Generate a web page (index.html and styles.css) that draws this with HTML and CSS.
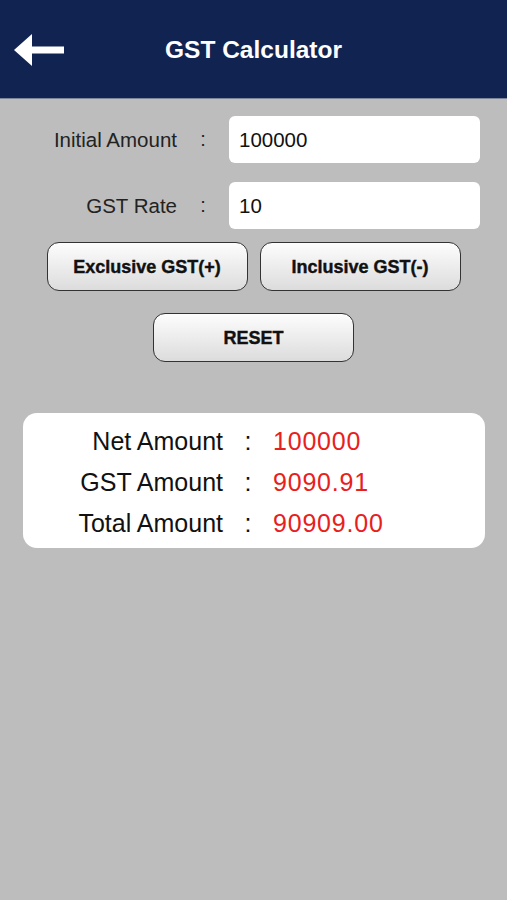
FILE: index.html
```html
<!DOCTYPE html>
<html>

<head>
    <meta charset="utf-8" />
    <title>GST Calculator</title>
    <link rel="stylesheet" href="styles.css">
</head>

<body>

<div class="header">
    <span class="back">
        <svg width="52" height="34" viewBox="0 0 52 34">
            <path d="M0 16 L18 0 L18 12.5 L50 12.5 L50 19.5 L18 19.5 L18 32 Z" fill="#fff"/>
        </svg>
    </span>
    <h1 class="title">GST Calculator</h1>
</div>

<div class="main">
    <div class="form">
        <div class="field">
            <label class="label">Initial Amount</label>
            <span class="colon">:</span>
            <input class="input" type="text" value="100000">
        </div>
        <div class="field">
            <label class="label">GST Rate</label>
            <span class="colon">:</span>
            <input class="input" type="text" value="10">
        </div>
    </div>

    <div class="btn-row">
        <button class="btn">Exclusive GST(+)</button>
        <button class="btn">Inclusive GST(-)</button>
    </div>
    <div class="btn-row">
        <button class="btn">RESET</button>
    </div>

    <div class="result">
        <div class="res-row">
            <span class="res-label">Net Amount</span>
            <span class="res-colon">:</span>
            <span class="res-value">100000</span>
        </div>
        <div class="res-row">
            <span class="res-label">GST Amount</span>
            <span class="res-colon">:</span>
            <span class="res-value">9090.91</span>
        </div>
        <div class="res-row">
            <span class="res-label">Total Amount</span>
            <span class="res-colon">:</span>
            <span class="res-value">90909.00</span>
        </div>
    </div>
</div>

</body>

</html>
```

FILE: styles.css
```css
* {
    padding: 0;
    margin: 0;
    box-sizing: border-box;
}

body {
    width: 507px;
    height: 900px;
    background: #bdbdbd;
    font-family: "Liberation Sans", Arial, sans-serif;
    color: #111;
}

.header {
    height: 99px;
    background: #112451;
    border-bottom: 1px solid #7d8599;
    display: flex;
    align-items: center;
    justify-content: center;
    position: relative;
}

.back {
    position: absolute;
    left: 14px;
    top: 34px;
    display: block;
    line-height: 0;
}

.title {
    color: #fff;
    font-size: 24.5px;
    font-weight: bold;
    margin-top: 2px;
}

.main {
    padding-top: 17px;
}

.form {
    display: flex;
    flex-direction: column;
    gap: 19px;
}

.field {
    display: flex;
    align-items: center;
    height: 47px;
}

.label {
    width: 177px;
    text-align: right;
    font-size: 20.5px;
    color: #222;
}

.colon {
    width: 52px;
    text-align: center;
    font-size: 20px;
    color: #222;
}

.input {
    width: 251px;
    height: 47px;
    border: 0;
    border-radius: 6px;
    background: #fff;
    padding-left: 10px;
    font-family: "Liberation Sans", Arial, sans-serif;
    font-size: 20.5px;
    color: #111;
}

.btn-row {
    display: flex;
    justify-content: center;
    gap: 12px;
    margin-top: 13px;
}

.btn-row + .btn-row {
    margin-top: 22px;
}

.btn {
    width: 201px;
    height: 49px;
    padding-top: 2px;
    border: 1.5px solid #333;
    border-radius: 12px;
    background: linear-gradient(#fdfdfd, #dcdcdc);
    font-family: "Liberation Sans", Arial, sans-serif;
    font-weight: bold;
    font-size: 18px;
    -webkit-text-stroke: 0.4px #111;
    color: #111;
}

.result {
    margin: 51px 22px 0 23px;
    background: #fff;
    border-radius: 14px;
    padding: 8px 0 4px;
    display: flex;
    flex-direction: column;
}

.res-row {
    display: flex;
    align-items: center;
    height: 41px;
    font-size: 25px;
}

.res-label {
    width: 200px;
    text-align: right;
    color: #111;
}

.res-colon {
    width: 50px;
    text-align: center;
}

.res-value {
    color: #e8201c;
    letter-spacing: 0.8px;
}
```
